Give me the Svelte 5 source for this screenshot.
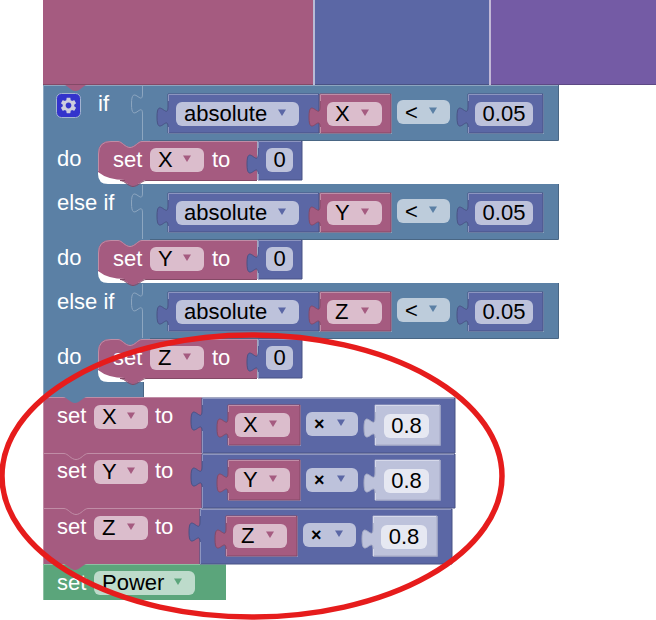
<script>
  const PINK = { fill: '#a55b80', light: '#c08da6', dark: '#844966', field: '#dbbdcc', arrow: '#a55b80' };
  const INDIGO = { fill: '#5b67a5', light: '#8d95c0', dark: '#495284', field: '#bdc2db', arrow: '#5b67a5' };
  const STEEL = { fill: '#5b80a5', light: '#8da6c0', dark: '#496684', field: '#bdccdb', arrow: '#5b80a5' };
  const GREEN = { fill: '#5ba57b', light: '#8dc0a3', dark: '#498462', field: '#bddbcb', arrow: '#5ba57b' };
  const PALE = { fill: '#bdc2db', light: '#d6d9ea', dark: '#a4a9c4', field: '#e6e8f2', arrow: '#5b67a5' };

  // value tab on the left edge, walking upward
  const tabUp = 'c 0,-13 -11,11 -11,-10 s 11,3.4 11,-10';
  const tabDown = 'c 0,13 -11,-11 -11,10 s 11,-3.4 11,10';
  // statement notch, walking right (dip) and left (bump)
  const dip = 'c 4,0 7,6 12,6 s 8,-6 12,-6';
  const bump = 'c -4,0 -8,6 -13,6 s -8,-6 -13,-6';

  function valuePath(x, y, w, h) {
    return `M ${x},${y} H ${x + w} V ${y + h} H ${x} V ${y + 33} ${tabUp} Z`;
  }

  function setPath(y) {
    return `M 98,${y + 31} V ${y + 13} Q 98,${y} 111,${y} H 118 ${dip} H 257 V ${y + 39} H 146 ${bump} H 125 Q 108,${y + 39} 98,${y + 31} Z`;
  }

  const values = [
    { x: 168, y: 94, w: 151, h: 39, c: INDIGO, nested: true },
    { x: 320, y: 94, w: 71, h: 39, c: PINK, nested: true },
    { x: 468, y: 94, w: 75, h: 39, c: INDIGO, nested: true },
    { x: 168, y: 193, w: 151, h: 39, c: INDIGO, nested: true },
    { x: 320, y: 193, w: 71, h: 39, c: PINK, nested: true },
    { x: 468, y: 193, w: 75, h: 39, c: INDIGO, nested: true },
    { x: 168, y: 292, w: 151, h: 39, c: INDIGO, nested: true },
    { x: 320, y: 292, w: 71, h: 39, c: PINK, nested: true },
    { x: 468, y: 292, w: 75, h: 39, c: INDIGO, nested: true },
    { x: 258, y: 141, w: 44, h: 39, c: INDIGO },
    { x: 258, y: 240, w: 44, h: 39, c: INDIGO },
    { x: 258, y: 339, w: 44, h: 39, c: INDIGO },
    { x: 202, y: 398, w: 253, h: 55, c: INDIGO },
    { x: 202, y: 454, w: 253, h: 54, c: INDIGO },
    { x: 200, y: 509, w: 252, h: 55, c: INDIGO },
    { x: 228, y: 405, w: 72, h: 40, c: PINK, nested: true },
    { x: 228, y: 460, w: 72, h: 40, c: PINK, nested: true },
    { x: 226, y: 516, w: 71, h: 40, c: PINK, nested: true },
    { x: 375, y: 405, w: 65, h: 40, c: PALE, nested: true },
    { x: 375, y: 460, w: 65, h: 40, c: PALE, nested: true },
    { x: 373, y: 516, w: 64, h: 40, c: PALE, nested: true },
  ];

  // dropdown and number fields
  const fields = [
    { x: 176, y: 102, w: 123, text: 'absolute', c: INDIGO, menu: true },
    { x: 327, y: 102, w: 55, text: 'X', c: PINK, menu: true },
    { x: 397, y: 100, w: 53, text: '<', c: STEEL, menu: true, op: true },
    { x: 475, y: 102, w: 58, text: '0.05', c: INDIGO },
    { x: 176, y: 201, w: 123, text: 'absolute', c: INDIGO, menu: true },
    { x: 327, y: 201, w: 55, text: 'Y', c: PINK, menu: true },
    { x: 397, y: 199, w: 53, text: '<', c: STEEL, menu: true, op: true },
    { x: 475, y: 201, w: 58, text: '0.05', c: INDIGO },
    { x: 176, y: 300, w: 123, text: 'absolute', c: INDIGO, menu: true },
    { x: 327, y: 300, w: 55, text: 'Z', c: PINK, menu: true },
    { x: 397, y: 298, w: 53, text: '<', c: STEEL, menu: true, op: true },
    { x: 475, y: 300, w: 58, text: '0.05', c: INDIGO },
    { x: 150, y: 148, w: 54, text: 'X', c: PINK, menu: true },
    { x: 150, y: 247, w: 54, text: 'Y', c: PINK, menu: true },
    { x: 150, y: 346, w: 54, text: 'Z', c: PINK, menu: true },
    { x: 266, y: 148, w: 27, text: '0', c: INDIGO },
    { x: 266, y: 247, w: 27, text: '0', c: INDIGO },
    { x: 266, y: 346, w: 27, text: '0', c: INDIGO },
    { x: 94, y: 405, w: 54, text: 'X', c: PINK, menu: true },
    { x: 94, y: 460, w: 54, text: 'Y', c: PINK, menu: true },
    { x: 94, y: 516, w: 54, text: 'Z', c: PINK, menu: true },
    { x: 235, y: 413, w: 55, text: 'X', c: PINK, menu: true },
    { x: 235, y: 468, w: 55, text: 'Y', c: PINK, menu: true },
    { x: 233, y: 524, w: 54, text: 'Z', c: PINK, menu: true },
    { x: 306, y: 412, w: 52, text: '×', c: INDIGO, menu: true, times: true },
    { x: 306, y: 468, w: 52, text: '×', c: INDIGO, menu: true, times: true },
    { x: 303, y: 523, w: 53, text: '×', c: INDIGO, menu: true, times: true },
    { x: 384, y: 414, w: 45, text: '0.8', c: PALE },
    { x: 384, y: 469, w: 45, text: '0.8', c: PALE },
    { x: 381, y: 525, w: 46, text: '0.8', c: PALE },
    { x: 94, y: 571, w: 101, text: 'Power', c: GREEN, menu: true },
  ];

  const labels = [
    { x: 98, y: 111, text: 'if' },
    { x: 57, y: 166, text: 'do' },
    { x: 57, y: 210, text: 'else if' },
    { x: 57, y: 265, text: 'do' },
    { x: 57, y: 309, text: 'else if' },
    { x: 57, y: 364, text: 'do' },
    { x: 113, y: 167, text: 'set' },
    { x: 113, y: 266, text: 'set' },
    { x: 113, y: 365, text: 'set' },
    { x: 212, y: 167, text: 'to' },
    { x: 212, y: 266, text: 'to' },
    { x: 212, y: 365, text: 'to' },
    { x: 57, y: 423, text: 'set' },
    { x: 155, y: 423, text: 'to' },
    { x: 57, y: 478, text: 'set' },
    { x: 155, y: 478, text: 'to' },
    { x: 57, y: 534, text: 'set' },
    { x: 155, y: 534, text: 'to' },
    { x: 57, y: 590, text: 'set' },
  ];

  const ifRows = [85, 184, 283];
  const doBlocks = [141, 240, 339];

  // the C-shaped if/else block, traced clockwise round its arms
  const controlPath = `M 43,85 H 558 V 140 H 150 V 150 H 120 Q 98,150 98,160 V 174 Q 98,184 108,184
    H 558 V 239 H 150 V 249 H 120 Q 98,249 98,259 V 273 Q 98,283 108,283
    H 558 V 338 H 150 V 348 H 120 Q 98,348 98,358 V 372 Q 98,382 108,382 H 143 V 397 H 43 Z`;
</script>

<svg class="workspace" viewBox="0 0 656 620" width="656" height="620" role="img" aria-label="Block program">
  <!-- blocks cut off at the top of the view -->
  <rect x="43" y="-4" width="270" height="89" fill={PINK.fill} />
  <rect x="43" y="84" width="270" height="1" fill={PINK.dark} />
  <rect x="315" y="-4" width="174" height="89" fill={INDIGO.fill} />
  <rect x="315" y="84" width="174" height="1" fill={INDIGO.dark} />
  <rect x="313" y="-4" width="2" height="89" fill="#b8bcd6" />
  <rect x="491" y="-4" width="165" height="89" fill="#745ba5" />
  <rect x="491" y="84" width="165" height="1" fill="#5d4984" />
  <rect x="489" y="-4" width="2" height="89" fill="#c2b8d6" />

  <path d={controlPath} fill={STEEL.fill} />
  <path d="M 43.500,397 V 85.500 H 558" fill="none" stroke={STEEL.light} />
  <path d="M 558.500,85 V 140.500 H 150 M 558.500,184 V 239.500 H 150 M 558.500,283 V 338.500 H 150 M 143.500,382 V 397" fill="none" stroke={STEEL.dark} />
  {#each ifRows as y}
    <path d="M 142.500,{y + 1} V {y + 9} {tabDown} V {y + 55}" fill="none" stroke={STEEL.light} />
  {/each}
  <path d="M 64,85 c 4,0 6,6 11.500,6 s 7.500,-6 11.500,-6 Z" fill={PINK.fill} />

  <!-- gear mutator -->
  <rect x="56.500" y="93.500" width="24" height="24" rx="5" fill="#3333cc" stroke="#a3b3d1" />
  <g transform="translate(58.900 95.900) scale(0.8)">
    <path fill="#ccd" d="M19.14 12.94c.04-.3.06-.61.06-.94 0-.32-.02-.64-.07-.94l2.03-1.58c.18-.14.23-.41.12-.61l-1.92-3.32c-.12-.22-.37-.29-.59-.22l-2.39.96c-.5-.38-1.03-.7-1.62-.94l-.36-2.54c-.04-.24-.24-.41-.48-.41h-3.84c-.24 0-.43.17-.47.41l-.36 2.54c-.59.24-1.13.57-1.62.94l-2.39-.96c-.22-.08-.47 0-.59.22L2.74 8.87c-.12.21-.08.47.12.61l2.03 1.58c-.05.3-.09.63-.09.94s.02.64.07.94l-2.03 1.58c-.18.14-.23.41-.12.61l1.92 3.32c.12.22.37.29.59.22l2.39-.96c.5.38 1.03.7 1.62.94l.36 2.54c.05.24.24.41.48.41h3.84c.24 0 .44-.17.47-.41l.36-2.54c.59-.24 1.13-.56 1.62-.94l2.39.96c.22.08.47 0 .59-.22l1.92-3.32c.12-.22.07-.47-.12-.61l-2.01-1.58zM12 15.6c-1.98 0-3.6-1.62-3.6-3.6s1.62-3.6 3.6-3.6 3.6 1.62 3.600 3.6-1.62 3.6-3.600 3.6z" />
  </g>

  <!-- statement blocks inside the if -->
  {#each doBlocks as y}
    <path d={setPath(y)} fill={PINK.fill} />
    <path d="M 98.500,{y + 30} V {y + 13} Q 98.500,{y + 0.5} 111,{y + 0.5} H 118 {dip} H 257" fill="none" stroke={PINK.light} />
    <path d="M 257,{y + 39.500} H 146 {bump} H 125" fill="none" stroke={PINK.dark} />
  {/each}

  <!-- set blocks stacked below -->
  <rect x="43" y="397" width="159" height="56" fill={PINK.fill} />
  <rect x="43" y="453" width="159" height="55" fill={PINK.fill} />
  <rect x="43" y="508" width="157" height="56" fill={PINK.fill} />
  <path d="M 43,397.500 H 202 M 43,453.500 H 64 {dip} H 202 M 43,508.500 H 64 {dip} H 200" fill="none" stroke={PINK.light} />
  <path d="M 43.500,397 V 564" stroke={PINK.light} />
  <path d="M 63,397 {dip} Z" fill={STEEL.fill} />

  <rect x="43" y="564" width="183" height="36" fill={GREEN.fill} />
  <path d="M 43.500,600 V 564.500 H 226" fill="none" stroke={GREEN.light} />
  <path d="M 63,564 {dip} Z" fill={PINK.fill} />

  {#each values as v}
    {#if v.nested}
      <path d="M {v.x + v.w + 0.5},{v.y} V {v.y + v.h + 0.5} H {v.x}" fill="none" stroke="#fff" stroke-opacity="0.3" />
    {/if}
    <path d={valuePath(v.x, v.y, v.w, v.h)} fill={v.c.fill} stroke={v.c.dark} />
    <path d="M {v.x + 0.5},{v.y + v.h} V {v.y + 33} M {v.x + 0.5},{v.y + 7} V {v.y + 0.5} H {v.x + v.w - 1}" fill="none" stroke={v.c.light} />
  {/each}

  {#each labels as l}
    <text class="label" x={l.x} y={l.y}>{l.text}</text>
  {/each}

  {#each fields as f}
    <rect x={f.x} y={f.y} width={f.w} height="24" rx="6" fill={f.c.field} />
    <text
      class="field"
      class:times={f.times}
      x={f.menu ? f.x + 8 : f.x + f.w / 2}
      y={f.y + (f.op ? 20 : f.times ? 18 : 19)}
      text-anchor={f.menu ? 'start' : 'middle'}
    >{f.text}</text>
    {#if f.menu}
      <path d="M {f.x + f.w - 21},{f.y + 7.500} h 8 l -4,6.500 Z" fill={f.c.arrow} />
    {/if}
  {/each}

  <ellipse class="circled" cx="252" cy="476" rx="250" ry="141" />
</svg>

<style>
  :global(body) {
    background: #fff;
    overflow: hidden;
  }

  .workspace {
    display: block;
  }

  .label,
  .field {
    font-family: "Liberation Sans", Arial, sans-serif;
    font-size: 22px;
  }

  .label {
    fill: #fff;
  }

  .field {
    fill: #000;
  }

  .times {
    font-weight: 700;
    font-size: 18px;
  }

  .circled {
    fill: none;
    stroke: #e61c1c;
    stroke-width: 5.500;
  }
</style>
